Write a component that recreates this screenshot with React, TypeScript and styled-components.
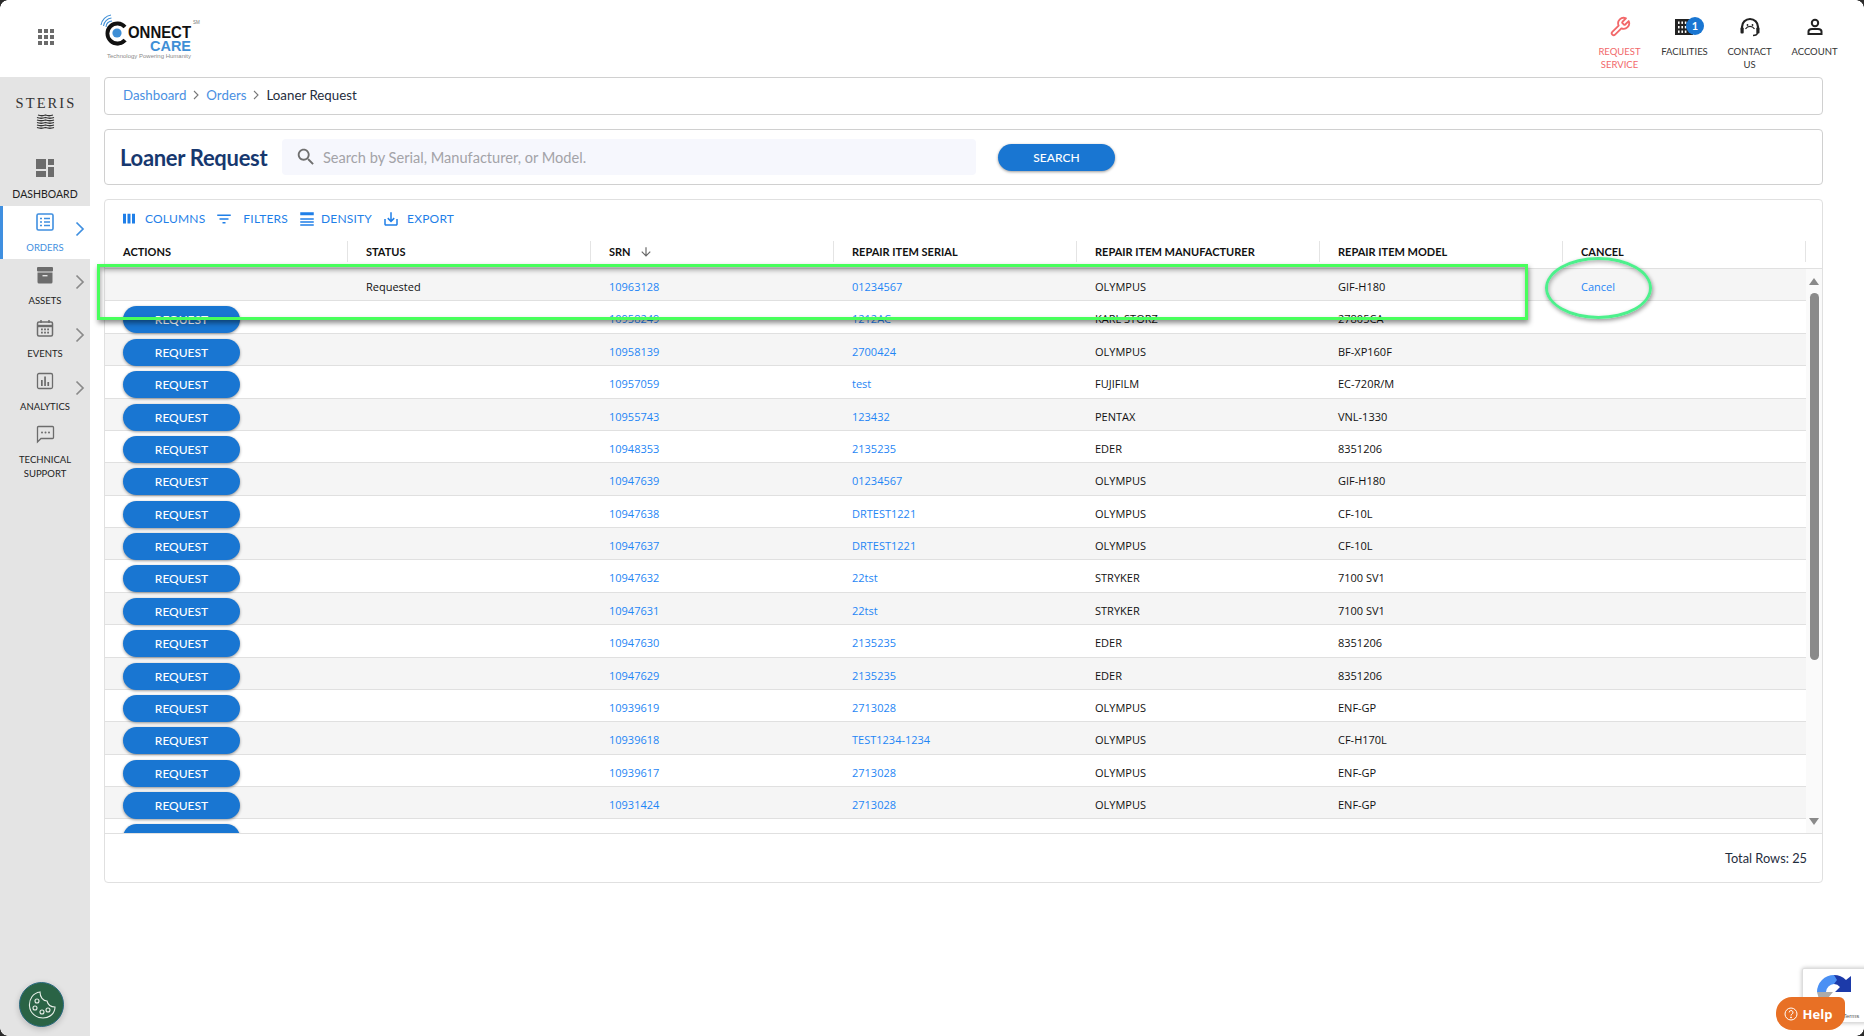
import React from "react";
import styled, { createGlobalStyle } from "styled-components";

const Global = createGlobalStyle`
  html, body { margin: 0; padding: 0; background: #fff; overflow: hidden; }
  * { box-sizing: border-box; }
  body { font-family: "Lato", "Open Sans", sans-serif; }
`;

const Page = styled.div`
  position: relative;
  width: 1864px;
  height: 1036px;
  overflow: hidden;
  display: grid;
  grid-template-columns: 90px 1fr;
  grid-template-rows: 77px 1fr;
  background: #fff;
`;

const TopBar = styled.header`
  grid-column: 1 / 3;
  display: flex;
  align-items: flex-start;
  padding-right: 18px;
`;
const AppsSlot = styled.div`
  width: 92px;
  height: 74px;
  flex-shrink: 0;
  display: flex;
  align-items: center;
  justify-content: center;
  color: #6b6b6b;
`;
const LogoSvg = styled.svg`
  display: block;
  margin: 12px 0 0 8px;
`;
const TopNav = styled.nav`
  margin-left: auto;
  display: flex;
  padding-top: 14px;
`;
const TopItem = styled.div<{ $red?: boolean }>`
  position: relative;
  width: 65px;
  display: flex;
  flex-direction: column;
  align-items: center;
  font-size: 9.5px;
  line-height: 13px;
  text-align: center;
  text-transform: uppercase;
  color: ${(p) => (p.$red ? "#f2686a" : "#333")};
`;
const TopIcon = styled.div`
  height: 26px;
  margin-bottom: 5px;
  display: flex;
  align-items: center;
  justify-content: center;
`;
const Badge = styled.span`
  position: absolute;
  top: 3px;
  left: 34px;
  width: 18px;
  height: 18px;
  border-radius: 50%;
  background: #1976d2;
  color: #fff;
  font-size: 11px;
  font-weight: 700;
  line-height: 18px;
`;

const Sidebar = styled.aside`
  background: #e4e4e4;
  display: flex;
  flex-direction: column;
`;
const Brand = styled.div`
  height: 75px;
  padding-top: 18px;
  display: flex;
  flex-direction: column;
  align-items: center;
  gap: 2px;
`;
const BrandName = styled.div`
  font-family: "Liberation Serif", serif;
  font-size: 14.5px;
  line-height: 17px;
  letter-spacing: 2.1px;
  margin-right: -2px;
  color: #333;
`;
const SideItem = styled.div<{ $active?: boolean; $h: number }>`
  position: relative;
  height: ${(p) => p.$h}px;
  display: flex;
  flex-direction: column;
  align-items: center;
  padding-top: 4px;
  background: ${(p) => (p.$active ? "#fff" : "transparent")};
  border-left: 3px solid ${(p) => (p.$active ? "#3f8fe0" : "transparent")};
  padding-right: 3px;
  color: ${(p) => (p.$active ? "#3f8fe0" : "#6c6c6c")};
`;
const SideIcon = styled.div`
  height: 24px;
  margin-bottom: 7px;
  display: flex;
  align-items: center;
  justify-content: center;
`;
const SideLabel = styled.div<{ $active?: boolean; $size: number }>`
  font-size: ${(p) => p.$size}px;
  line-height: 14px;
  text-align: center;
  text-transform: uppercase;
  color: ${(p) => (p.$active ? "#3f8fe0" : "#222")};
`;
const Chevron = styled.svg`
  position: absolute;
  right: 5px;
  top: 15px;
`;

const Main = styled.main`
  padding: 0 42px 0 14px;
  display: flex;
  flex-direction: column;
`;
const Card = styled.section`
  background: #fff;
  border: 1px solid #d0d0d0;
  border-radius: 4px;
`;
const Crumbs = styled(Card)`
  height: 38px;
  display: flex;
  align-items: center;
  padding: 0 0 2px 18px;
  font-size: 13.3px;
  color: #1f2d3d;
  margin-bottom: 14px;
`;
const Crumb = styled.span`
  color: #4a90e2;
`;
const CrumbSep = styled.svg`
  margin: 0 6px;
  color: #777;
`;
const TitleCard = styled(Card)`
  height: 56px;
  display: flex;
  align-items: center;
  padding-left: 15px;
  margin-bottom: 14px;
`;
const Title = styled.h1`
  margin: 0;
  width: 162px;
  font-size: 22px;
  font-weight: 700;
  letter-spacing: -0.3px;
  color: #17386f;
`;
const SearchBox = styled.div`
  width: 694px;
  height: 36px;
  background: #f6f7fd;
  border-radius: 4px;
  display: flex;
  align-items: center;
  gap: 6px;
  padding-left: 13px;
  color: #6f6f6f;
  font-size: 14.6px;
`;
const Placeholder = styled.span`
  color: #a3a3a8;
`;
const PillButton = styled.button`
  width: 117px;
  height: 27px;
  border: 0;
  border-radius: 14px;
  background: #1976d2;
  color: #fff;
  font-family: "Lato", sans-serif;
  font-size: 12px;
  font-weight: 500;
  padding: 0;
  box-shadow: 0 1px 3px rgba(0, 0, 0, 0.4);
`;
const SearchButton = styled(PillButton)`
  margin-left: 22px;
`;

const TableCard = styled.section`
  height: 684px;
  border: 1px solid #e0e0e0;
  border-radius: 4px;
  display: flex;
  flex-direction: column;
  background: #fff;
`;
const Toolbar = styled.div`
  height: 41px;
  padding: 0 0 4px 15px;
  display: flex;
  align-items: center;
  color: #1f7fe8;
  font-size: 12px;
  letter-spacing: 0.2px;
`;
const ToolItem = styled.div<{ $gap: number }>`
  display: flex;
  align-items: center;
  gap: ${(p) => p.$gap}px;
  margin-right: 10px;
`;
const Cols = "repeat(7, 243px)";
const HeaderRow = styled.div`
  display: grid;
  grid-template-columns: ${Cols};
  height: 28px;
  border-bottom: 1px solid #e0e0e0;
  padding-bottom: 6px;
`;
const HeaderCell = styled.div`
  display: flex;
  align-items: center;
  gap: 8px;
  padding-left: 18px;
  font-size: 11px;
  font-weight: 700;
  color: #111;
  border-right: 1px solid #e4e4e4;
`;
const BodyWrap = styled.div`
  height: 565px;
  display: flex;
  overflow: hidden;
  border-bottom: 1px solid #e0e0e0;
`;
const RowList = styled.div`
  width: 1701px;
`;
const Row = styled.div<{ $alt: boolean }>`
  display: grid;
  grid-template-columns: ${Cols};
  height: 32.375px;
  border-bottom: 1px solid #e0e0e0;
  background: ${(p) => (p.$alt ? "#f5f5f5" : "#fff")};
  font-family: "Open Sans", sans-serif;
  font-size: 11px;
  color: #111;
`;
const Cell = styled.div`
  display: flex;
  align-items: center;
  padding: 3px 0 0 18px;
  white-space: nowrap;
`;
const LinkCell = styled(Cell)`
  color: #1f86f5;
`;
const ActionCell = styled(Cell)`
  align-items: flex-start;
  padding-top: 5px;
`;
const ScrollTrack = styled.div`
  width: 16px;
  background: #fafafa;
  display: flex;
  flex-direction: column;
  align-items: center;
  padding: 9px 0 8px;
`;
const ArrowUp = styled.div`
  width: 0;
  height: 0;
  border-left: 5px solid transparent;
  border-right: 5px solid transparent;
  border-bottom: 7px solid #8a8a8a;
`;
const ArrowDown = styled.div`
  width: 0;
  height: 0;
  margin-top: auto;
  border-left: 5px solid transparent;
  border-right: 5px solid transparent;
  border-top: 7px solid #8a8a8a;
`;
const Thumb = styled.div`
  width: 9px;
  height: 367px;
  margin-top: 8px;
  border-radius: 5px;
  background: #8a8a8a;
`;
const TableFooter = styled.div`
  flex: 1;
  display: flex;
  align-items: center;
  justify-content: flex-end;
  padding-right: 15px;
  font-size: 12.8px;
  color: #1f2d3d;
`;

const GreenRect = styled.div`
  position: absolute;
  left: 97px;
  top: 264px;
  width: 1431px;
  height: 56px;
  border: 3px solid #48ff5c;
  box-shadow: 1px 3px 5px rgba(0, 0, 0, 0.45), inset 1px 3px 5px rgba(0, 0, 0, 0.35);
`;
const GreenOval = styled.div`
  position: absolute;
  left: 1545px;
  top: 257px;
  width: 107px;
  height: 62px;
  border: 3px solid #4df08c;
  border-radius: 50%;
  box-shadow: 1px 2px 4px rgba(0, 0, 0, 0.4), inset 1px 2px 4px rgba(0, 0, 0, 0.3);
`;
const CookieButton = styled.div`
  position: absolute;
  left: 19px;
  top: 982px;
  width: 45px;
  height: 45px;
  border-radius: 50%;
  background: #2a6345;
  border: 1px solid #2a6a80;
  box-shadow: 0 2px 6px rgba(0, 0, 0, 0.2);
  display: flex;
  align-items: center;
  justify-content: center;
`;
const Recaptcha = styled.div`
  position: absolute;
  left: 1802px;
  top: 968px;
  width: 70px;
  height: 55px;
  background: #fff;
  border: 1px solid #ddd;
  border-radius: 2px;
  box-shadow: 0 0 4px rgba(0, 0, 0, 0.25);
  padding: 6px 0 0 14px;
  font-family: "Liberation Sans", sans-serif;
  font-size: 6px;
  color: #555;
`;
const RecaptchaText = styled.div`
  margin: 3px 0 0 26px;
`;
const HelpButton = styled.div`
  position: absolute;
  left: 1776px;
  top: 997px;
  width: 69px;
  height: 33px;
  padding-right: 5px;
  background: #e87025;
  border-radius: 16px 6px 16px 16px;
  display: flex;
  align-items: center;
  justify-content: center;
  gap: 5px;
  color: #fff;
  font-family: "Open Sans", sans-serif;
  font-size: 13px;
  font-weight: 700;
`;
const ScreenCorner = styled.div<{ $x: "left" | "right"; $y: "top" | "bottom" }>`
  position: absolute;
  ${(p) => p.$x}: 0;
  ${(p) => p.$y}: 0;
  width: 8px;
  height: 8px;
  background: radial-gradient(
    circle at ${(p) => (p.$x === "left" ? "100%" : "0")} ${(p) => (p.$y === "top" ? "100%" : "0")},
    transparent 7.5px,
    #2b2b2b 8px
  );
`;

const Mui = ({ d, size = 24, color = "currentColor" }: { d: string; size?: number; color?: string }) => (
  <svg width={size} height={size} viewBox="0 0 24 24" fill={color}>
    <path d={d} />
  </svg>
);

const P = {
  apps: "M4 8h4V4H4v4zm6 12h4v-4h-4v4zm-6 0h4v-4H4v4zm0-6h4v-4H4v4zm6 0h4v-4h-4v4zm6-10v4h4V4h-4zm-6 4h4V4h-4v4zm6 6h4v-4h-4v4zm0 6h4v-4h-4v4z",
  dashboard: "M3 13h10V3H3v10zm0 8h10v-6H3v6zm12 0h6V11h-6v10zm0-18v6h6V3h-6z",
  columns: "M10 18h4V5h-4v13zm-6 0h4V5H4v13zM16 5v13h4V5h-4z",
  filter: "M10 18h4v-2h-4v2zM3 6v2h18V6H3zm3 7h12v-2H6v2z",
  density: "M3 21h18v-2H3v2zm0-4h18v-2H3v2zm0-4h18v-2H3v2zm0-6h18V5H3v2z M3 5h18V3H3z",
  export: "M19 12v7H5v-7H3v7c0 1.1.9 2 2 2h14c1.1 0 2-.9 2-2v-7h-2zm-6 .67l2.59-2.58L17 11.5l-5 5-5-5 1.41-1.41L11 12.67V3h2z",
  search: "M15.5 14h-.79l-.28-.27C15.41 12.59 16 11.11 16 9.5 16 5.91 13.09 3 9.5 3S3 5.91 3 9.5 5.91 16 9.5 16c1.61 0 3.09-.59 4.23-1.57l.27.28v.79l5 4.99L20.49 19l-4.99-5zm-6 0C7.01 14 5 11.99 5 9.5S7.01 5 9.5 5 14 7.01 14 9.5 11.99 14 9.5 14z",
  arrowDown: "M20 12l-1.41-1.41L13 16.17V4h-2v12.17l-5.58-5.59L4 12l8 8 8-8z",
};

const Logo = () => (
  <LogoSvg width="102" height="50" viewBox="0 0 102 50">
    <g fill="none" stroke="#3f8fd6" strokeWidth="1.1">
      <path d="M1 13 A12 12 0 0 1 11 3" />
      <path d="M3.5 14 A9 9 0 0 1 11.5 6" />
      <path d="M6 15 A6 6 0 0 1 12 9" />
    </g>
    <path d="M25 15 A10 10 0 1 0 25 28" fill="none" stroke="#111" strokeWidth="3.8" />
    <circle cx="17" cy="21" r="4.6" fill="#3f8fd6" />
    <path d="M8 28 Q17 38 27 29 Q17 33 8 28Z" fill="#111" />
    <text x="28" y="26" textLength="63" lengthAdjust="spacingAndGlyphs" fontFamily="Liberation Sans" fontWeight="700" fontSize="16" fill="#111">ONNECT</text>
    <text x="50" y="39" textLength="41" lengthAdjust="spacingAndGlyphs" fontFamily="Liberation Sans" fontWeight="700" fontSize="15.5" fill="#3f8fd6">CARE</text>
    <text x="93" y="12" fontFamily="Liberation Sans" fontSize="4.5" fill="#777">SM</text>
    <text x="7" y="46" textLength="84" lengthAdjust="spacingAndGlyphs" fontFamily="Liberation Sans" fontSize="5.6" fill="#8a8a8a">Technology Powering Humanity</text>
  </LogoSvg>
);

const SterisMark = () => (
  <svg width="19" height="16" viewBox="0 0 19 16" fill="none" stroke="#333" strokeWidth="1.25">
    <path d="M2 1 Q6 2.5 9.5 1 Q13 2.5 17 1" />
    <path d="M1 3.5 Q5 5 9.5 3.5 Q14 5 18 3.5" />
    <path d="M1 6 Q5 7.5 9.5 6 Q14 7.5 18 6" />
    <path d="M1 8.5 Q5 10 9.5 8.5 Q14 10 18 8.5" />
    <path d="M1 11 Q5 12.5 9.5 11 Q14 12.5 18 11" />
    <path d="M1 13.5 Q5 15 9.5 13.5 Q14 15 18 13.5" />
  </svg>
);

const WrenchIcon = () => (
  <svg width="22" height="22" viewBox="0 0 24 24" fill="none" stroke="#f2686a" strokeWidth="2" strokeLinejoin="round">
    <path d="M14.7 6.3a1 1 0 0 0 0 1.4l1.6 1.6a1 1 0 0 0 1.4 0l3.77-3.77a6 6 0 0 1-7.94 7.94l-6.91 6.91a2.12 2.12 0 0 1-3-3l6.91-6.91a6 6 0 0 1 7.94-7.94l-3.76 3.76z" />
  </svg>
);
const BuildingIcon = () => (
  <svg width="24" height="22" viewBox="0 0 24 22" fill="#222">
    <path d="M2 3h18v16H2z" />
    <g fill="#fff">
      <rect x="5" y="5.5" width="1.6" height="2.4" /><rect x="8.4" y="5.5" width="1.6" height="2.4" /><rect x="11.8" y="5.5" width="1.6" height="2.4" />
      <rect x="5" y="10" width="1.6" height="2.4" /><rect x="8.4" y="10" width="1.6" height="2.4" /><rect x="11.8" y="10" width="1.6" height="2.4" />
      <rect x="5" y="14.5" width="1.6" height="2.4" /><rect x="8.4" y="14.5" width="1.6" height="2.4" /><rect x="11.8" y="14.5" width="1.6" height="2.4" />
    </g>
  </svg>
);
const HeadsetIcon = () => (
  <svg width="22" height="22" viewBox="0 0 22 22" fill="none" stroke="#222" strokeWidth="2.2">
    <path d="M3 14 V11 A8 8 0 0 1 19 11 V14" />
    <path d="M6.5 13 A5.5 6 0 0 1 15.5 13" strokeWidth="1.2" />
    <rect x="1.5" y="11.5" width="3.2" height="6" fill="#222" stroke="none" rx="1" />
    <rect x="17.3" y="11.5" width="3.2" height="6" fill="#222" stroke="none" rx="1" />
    <path d="M18.5 17 Q18 19.5 14 19.5" strokeWidth="1.4" />
    <circle cx="8.5" cy="9" r="0.9" fill="#222" stroke="none" />
    <circle cx="13.5" cy="9" r="0.9" fill="#222" stroke="none" />
  </svg>
);
const AccountIcon = () => (
  <svg width="22" height="22" viewBox="0 0 22 22" fill="none" stroke="#222" strokeWidth="2">
    <circle cx="11" cy="7" r="3.2" />
    <path d="M4.5 18 V15.5 Q4.5 13 8 13 H14 Q17.5 13 17.5 15.5 V18 Z" />
  </svg>
);

const OrdersIcon = () => (
  <svg width="18" height="18" viewBox="0 0 18 18" fill="none" stroke="currentColor">
    <rect x="1" y="1" width="16" height="16" rx="1.5" strokeWidth="1.6" />
    <g strokeWidth="1.6">
      <path d="M4 5.5h2M8 5.5h6M4 9h2M8 9h6M4 12.5h2M8 12.5h6" />
    </g>
  </svg>
);
const AssetsIcon = () => (
  <svg width="18" height="18" viewBox="0 0 18 18" fill="#6c6c6c">
    <rect x="1" y="1" width="16" height="4.5" rx="1" />
    <path d="M1.5 6.5h15V16a1.5 1.5 0 0 1-1.5 1.5H3A1.5 1.5 0 0 1 1.5 16z" />
    <rect x="6.5" y="9" width="5" height="1.4" fill="#e4e4e4" />
  </svg>
);
const EventsIcon = () => (
  <svg width="18" height="18" viewBox="0 0 18 18" fill="none" stroke="#6c6c6c" strokeWidth="1.5">
    <rect x="1.5" y="3" width="15" height="14" rx="1.5" />
    <path d="M1.5 7h15" strokeWidth="2.4" />
    <path d="M5 1v3M13 1v3" />
    <g fill="#6c6c6c" stroke="none">
      <rect x="5" y="9.5" width="1.8" height="1.8" /><rect x="8.1" y="9.5" width="1.8" height="1.8" /><rect x="11.2" y="9.5" width="1.8" height="1.8" />
      <rect x="5" y="12.7" width="1.8" height="1.8" /><rect x="8.1" y="12.7" width="1.8" height="1.8" /><rect x="11.2" y="12.7" width="1.8" height="1.8" />
    </g>
  </svg>
);
const AnalyticsIcon = () => (
  <svg width="18" height="18" viewBox="0 0 18 18" fill="none" stroke="#6c6c6c" strokeWidth="1.3">
    <rect x="1.5" y="1.5" width="15" height="15" rx="1.5" />
    <g fill="#6c6c6c" stroke="none">
      <rect x="5" y="8" width="1.7" height="6" /><rect x="8.2" y="4.5" width="1.7" height="9.5" /><rect x="11.4" y="10" width="1.7" height="4" />
    </g>
  </svg>
);
const ChatIcon = () => (
  <svg width="19" height="19" viewBox="0 0 19 19" fill="none" stroke="#6c6c6c" strokeWidth="1.3">
    <path d="M2.5 1.5h14a1 1 0 0 1 1 1v10a1 1 0 0 1-1 1H5l-3.5 3.5V2.5a1 1 0 0 1 1-1z" />
    <g fill="#6c6c6c" stroke="none">
      <circle cx="6" cy="7.5" r="1" /><circle cx="9.5" cy="7.5" r="1" /><circle cx="13" cy="7.5" r="1" />
    </g>
  </svg>
);
const ChevronIcon = ({ color }: { color: string }) => (
  <Chevron width="10" height="16" viewBox="0 0 10 16" fill="none" stroke={color} strokeWidth="1.7">
    <path d="M1.5 1.5 L8 8 L1.5 14.5" />
  </Chevron>
);
const CookieIcon = () => (
  <svg width="32" height="32" viewBox="0 0 32 32" fill="none" stroke="#e8efe8" strokeWidth="1.1">
    <path d="M14 3 C7 4 3 10 3.5 17 C4 24 10 29 17 29 C24 29 29 24 29 18 C25 18 22 16 21 12 C17 12 14 8 14 3 Z" />
    <circle cx="11" cy="12" r="2" /><circle cx="9" cy="19" r="2" /><circle cx="16" cy="23" r="2" /><circle cx="22" cy="21" r="2" />
  </svg>
);
const HelpIcon = () => (
  <svg width="14" height="14" viewBox="0 0 14 14" fill="none" stroke="#fff" strokeWidth="1">
    <circle cx="7" cy="7" r="6" />
    <path d="M5.2 5.4a1.9 1.9 0 1 1 2.8 1.7c-.7.4-1 .7-1 1.5" />
    <circle cx="7" cy="10.4" r=".5" fill="#fff" />
  </svg>
);
const RecaptchaIcon = () => (
  <svg width="34" height="34" viewBox="0 0 34 34">
    <path d="M17 0 A17 17 0 0 1 29 5 L34 1 V17 H18 L23 12 A8.5 8.5 0 0 0 17 9Z" fill="#1c3aa9" />
    <path d="M17 0 A17 17 0 0 0 0 17 H9 A8.5 8.5 0 0 1 17 9 L20 5Z" fill="#4a90f4" />
    <path d="M0 17 H16 L11 23 L14 26 H4 A17 17 0 0 1 0 17Z" fill="#ababab" />
  </svg>
);

type R = [string, string, string, string];
const data: R[] = [
  ["10963128", "01234567", "OLYMPUS", "GIF-H180"],
  ["10958249", "1212AC", "KARL STORZ", "27805CA"],
  ["10958139", "2700424", "OLYMPUS", "BF-XP160F"],
  ["10957059", "test", "FUJIFILM", "EC-720R/M"],
  ["10955743", "123432", "PENTAX", "VNL-1330"],
  ["10948353", "2135235", "EDER", "8351206"],
  ["10947639", "01234567", "OLYMPUS", "GIF-H180"],
  ["10947638", "DRTEST1221", "OLYMPUS", "CF-10L"],
  ["10947637", "DRTEST1221", "OLYMPUS", "CF-10L"],
  ["10947632", "22tst", "STRYKER", "7100 SV1"],
  ["10947631", "22tst", "STRYKER", "7100 SV1"],
  ["10947630", "2135235", "EDER", "8351206"],
  ["10947629", "2135235", "EDER", "8351206"],
  ["10939619", "2713028", "OLYMPUS", "ENF-GP"],
  ["10939618", "TEST1234-1234", "OLYMPUS", "CF-H170L"],
  ["10939617", "2713028", "OLYMPUS", "ENF-GP"],
  ["10931424", "2713028", "OLYMPUS", "ENF-GP"],
  ["10931423", "200803293", "OLYMPUS", "CF-H170L"],
];

const headers = ["Actions", "Status", "SRN", "Repair Item Serial", "Repair Item Manufacturer", "Repair Item Model", "Cancel"];

const sideItems = [
  { label: ["Dashboard"], icon: <Mui d={P.dashboard} size={24} color="#6c6c6c" />, h: 54, size: 10.5 },
  { label: ["Orders"], icon: <OrdersIcon />, h: 53, active: true, chevron: "#3f8fe0", size: 9.5 },
  { label: ["Assets"], icon: <AssetsIcon />, h: 53, chevron: "#8a8a8a", size: 9.5 },
  { label: ["Events"], icon: <EventsIcon />, h: 53, chevron: "#8a8a8a", size: 9.5 },
  { label: ["Analytics"], icon: <AnalyticsIcon />, h: 53, chevron: "#8a8a8a", size: 9.5 },
  { label: ["Technical", "Support"], icon: <ChatIcon />, h: 67, size: 9.5 },
];

const tools = [
  { d: P.columns, label: "COLUMNS", gap: 7 },
  { d: P.filter, label: "FILTERS", gap: 10 },
  { d: P.density, label: "DENSITY", gap: 5 },
  { d: P.export, label: "EXPORT", gap: 7 },
];

export default function App() {
  return (
    <Page>
      <Global />
      <TopBar>
        <AppsSlot>
          <Mui d={P.apps} size={24} />
        </AppsSlot>
        <Logo />
        <TopNav>
          <TopItem $red>
            <TopIcon><WrenchIcon /></TopIcon>
            Request<br />Service
          </TopItem>
          <TopItem>
            <TopIcon><BuildingIcon /></TopIcon>
            <Badge>1</Badge>
            Facilities
          </TopItem>
          <TopItem>
            <TopIcon><HeadsetIcon /></TopIcon>
            Contact<br />Us
          </TopItem>
          <TopItem>
            <TopIcon><AccountIcon /></TopIcon>
            Account
          </TopItem>
        </TopNav>
      </TopBar>

      <Sidebar>
        <Brand>
          <BrandName>STERIS</BrandName>
          <SterisMark />
        </Brand>
        {sideItems.map((s) => (
          <SideItem key={s.label[0]} $active={s.active} $h={s.h}>
            <SideIcon>{s.icon}</SideIcon>
            <SideLabel $active={s.active} $size={s.size}>
              {s.label.map((l) => (
                <div key={l}>{l}</div>
              ))}
            </SideLabel>
            {s.chevron && <ChevronIcon color={s.chevron} />}
          </SideItem>
        ))}
      </Sidebar>

      <Main>
        <Crumbs>
          <Crumb>Dashboard</Crumb>
          <CrumbSep width="8" height="10" viewBox="0 0 8 10" fill="none" stroke="currentColor" strokeWidth="1.1"><path d="M2 1l4 4-4 4" /></CrumbSep>
          <Crumb>Orders</Crumb>
          <CrumbSep width="8" height="10" viewBox="0 0 8 10" fill="none" stroke="currentColor" strokeWidth="1.1"><path d="M2 1l4 4-4 4" /></CrumbSep>
          Loaner Request
        </Crumbs>
        <TitleCard>
          <Title>Loaner Request</Title>
          <SearchBox>
            <Mui d={P.search} size={22} />
            <Placeholder>Search by Serial, Manufacturer, or Model.</Placeholder>
          </SearchBox>
          <SearchButton>SEARCH</SearchButton>
        </TitleCard>
        <TableCard>
          <Toolbar>
            {tools.map((t) => (
              <ToolItem key={t.label} $gap={t.gap}>
                <Mui d={t.d} size={18} />
                {t.label}
              </ToolItem>
            ))}
          </Toolbar>
          <HeaderRow>
            {headers.map((h) => (
              <HeaderCell key={h}>
                {h.toUpperCase()}
                {h === "SRN" && <Mui d={P.arrowDown} size={14} color="#666" />}
              </HeaderCell>
            ))}
          </HeaderRow>
          <BodyWrap>
            <RowList>
              {data.map((r, i) => (
                <Row key={r[0]} $alt={i % 2 === 0}>
                  {i === 0 ? <Cell /> : <ActionCell><PillButton>REQUEST</PillButton></ActionCell>}
                  <Cell>{i === 0 ? "Requested" : ""}</Cell>
                  <LinkCell>{r[0]}</LinkCell>
                  <LinkCell>{r[1]}</LinkCell>
                  <Cell>{r[2]}</Cell>
                  <Cell>{r[3]}</Cell>
                  {i === 0 ? <LinkCell>Cancel</LinkCell> : <Cell />}
                </Row>
              ))}
            </RowList>
            <ScrollTrack>
              <ArrowUp />
              <Thumb />
              <ArrowDown />
            </ScrollTrack>
          </BodyWrap>
          <TableFooter>Total Rows: 25</TableFooter>
        </TableCard>
      </Main>

      <GreenRect />
      <GreenOval />
      <CookieButton><CookieIcon /></CookieButton>
      <Recaptcha>
        <RecaptchaIcon />
        <RecaptchaText>Terms</RecaptchaText>
      </Recaptcha>
      <HelpButton><HelpIcon />Help</HelpButton>
      <ScreenCorner $x="left" $y="top" />
      <ScreenCorner $x="right" $y="top" />
      <ScreenCorner $x="left" $y="bottom" />
      <ScreenCorner $x="right" $y="bottom" />
    </Page>
  );
}
